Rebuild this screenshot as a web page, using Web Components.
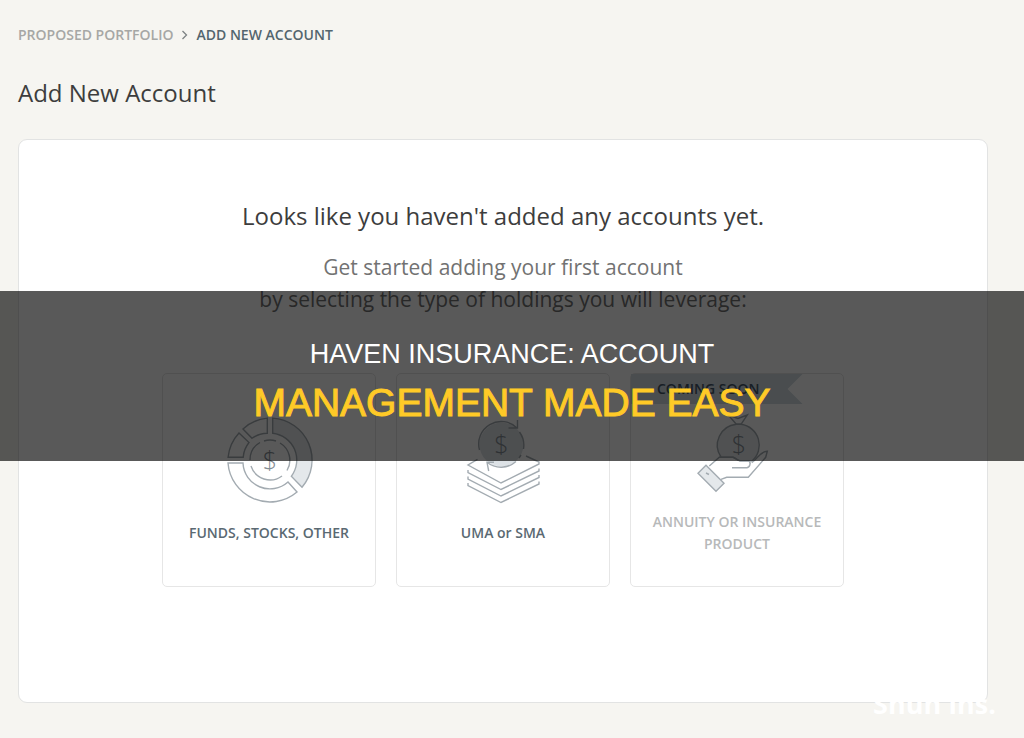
<!DOCTYPE html>
<html lang="en">
<head>
  <meta charset="utf-8">
  <meta name="viewport" content="width=device-width, initial-scale=1">
  <title>Add New Account</title>
  <style>
    body {
      margin: 0;
      background: #f6f5f1;
      font-family: 'Open Sans', 'Noto Sans', sans-serif;
      color: #3d3d3d;
    }
  </style>
</head>
<body>
  <account-page>
    <bread-crumb slot="crumbs" parent="PROPOSED PORTFOLIO" current="ADD NEW ACCOUNT"></bread-crumb>
    <span slot="title">Add New Account</span>
    <empty-panel>
      <span slot="heading">Looks like you haven't added any accounts yet.</span>
      <span slot="text">Get started adding your first account<br>by selecting the type of holdings you will leverage:</span>
      <account-option icon="funds">FUNDS, STOCKS, OTHER</account-option>
      <account-option icon="uma">UMA or SMA</account-option>
      <account-option icon="annuity" badge="COMING SOON" disabled>ANNUITY OR INSURANCE PRODUCT</account-option>
    </empty-panel>
  </account-page>
  <title-banner>
    HAVEN INSURANCE: ACCOUNT
    <span slot="accent">MANAGEMENT MADE EASY</span>
  </title-banner>
  <site-mark>Shun Ins.</site-mark>

  <script>
    const icons = {
      funds: `
        <g transform="translate(1 0)">
          <path class="tint" d="M47.7 3.1A42 42 0 0 1 77 72.3L66.3 61.3A27 27 0 0 0 47.7 18.2Z"/>
          <path d="M72 77A42 42 0 0 1 3 48H18A27 27 0 0 0 63 67Z"/>
          <path d="M3.1 42.3A42 42 0 0 1 14 18L24 27.5A27 27 0 0 0 18.2 42.3Z"/>
          <path d="M18 14A42 42 0 0 1 42.3 3.1V18.2A27 27 0 0 0 27 23.3Z"/>
          <path d="M39 26A20 20 0 0 1 51 26M55 28A20 20 0 0 1 62 55.5M57 61A20 20 0 0 1 26 51M25 45A20 20 0 0 1 35 27.5"/>
          <text x="45" y="54">$</text>
        </g>`,
      uma: `
        <path d="M19.5 44.3L10 50L43 68L81 49V47L68 41"/>
        <path d="M10 55V57.5L43 74.5L81 56V53.5"/>
        <path d="M10 61.5V64L43 81L81 62.5V60"/>
        <path d="M10 68V70.5L43 87.5L81 69V66.5"/>
        <circle class="fill" cx="43.5" cy="29.5" r="22"/>
        <path d="M21.5 35A22.5 22.5 0 0 1 59 13M59.5 5V13H50.5"/>
        <path d="M61.5 17A22.5 22.5 0 0 1 65.5 34M63 40L61 43M58 46.5A22.5 22.5 0 0 1 29 47.3M30.7 56L29 47.3H36"/>
        <text x="43.5" y="38">$</text>`,
      annuity: `
        <g transform="translate(-1 0)">
          <path class="tint" d="M42 42.3H28.5L30 42A21 21 0 0 1 45.3 9.3H50A21 21 0 0 1 61 46H49Z"/>
          <path d="M45.3 9.3L37.3 0L47 3.5L56.3 0L50 9.3Z"/>
          <path d="M18.3 51L28.3 42.3H42C45 42.3 45 45.5 49 45.7H58C60 48 59 52.7 55.7 52.7H41"/>
          <path d="M60.7 47.7C67 43.5 68 37 76.3 36.3L74.7 42.3L57.3 62.3H35.7L30 64.3"/>
          <path class="tint" d="M15 50.3L33 68.3L25 76.3L7 58.3Z"/>
          <path d="M15 58L18 59.5"/>
          <text x="48" y="38">$</text>
        </g>`
    };

    class AccountPage extends HTMLElement {
      constructor() {
        super();

        this.attachShadow({ mode: 'open' });
        this.shadowRoot.innerHTML = `
          <style>
            :host {
              display: block;
              padding: 24px 36px 35px 18px;
            }

            h1 {
              margin: 30px 0 29px;
              font-size: 24px;
              line-height: 34px;
              font-weight: 400;
            }
          </style>
          <slot name="crumbs"></slot>
          <main>
            <h1><slot name="title"></slot></h1>
            <slot></slot>
          </main>
        `;
      }
    }

    class BreadCrumb extends HTMLElement {
      constructor() {
        super();

        const parent = this.getAttribute('parent');
        const current = this.getAttribute('current');

        this.attachShadow({ mode: 'open' });
        this.shadowRoot.innerHTML = `
          <style>
            :host {
              display: block;
              font-size: 14px;
              line-height: 22px;
              font-weight: 600;
            }

            nav {
              display: flex;
              align-items: center;
              gap: 8px;
            }

            a {
              color: #a6a7a5;
              text-decoration: none;
            }

            svg {
              width: 7px;
              height: 10px;
              fill: none;
              stroke: #7d8284;
              stroke-width: 1.3;
            }

            span {
              color: #53656e;
            }
          </style>
          <nav aria-label="Breadcrumb">
            <a href="#">${parent}</a>
            <svg viewBox="0 0 7 10" aria-hidden="true"><path d="M1.5 1L5.5 5L1.5 9"/></svg>
            <span aria-current="page">${current}</span>
          </nav>
        `;
      }
    }

    class EmptyPanel extends HTMLElement {
      constructor() {
        super();

        this.attachShadow({ mode: 'open' });
        this.shadowRoot.innerHTML = `
          <style>
            :host {
              display: block;
              padding: 60px 24px 115px;
              background: #fff;
              border: 1px solid #e2e3e3;
              border-radius: 9px;
              text-align: center;
            }

            h2 {
              margin: 0 0 19px;
              font-size: 24px;
              line-height: 32px;
              font-weight: 400;
            }

            p {
              margin: 0 0 58px;
              font-size: 21px;
              line-height: 32px;
              color: #727272;
            }

            .options {
              display: flex;
              flex-wrap: wrap;
              justify-content: center;
              gap: 20px;
            }
          </style>
          <h2><slot name="heading"></slot></h2>
          <p><slot name="text"></slot></p>
          <div class="options"><slot></slot></div>
        `;
      }
    }

    class AccountOption extends HTMLElement {
      constructor() {
        super();

        const icon = this.getAttribute('icon');
        const badge = this.getAttribute('badge');
        const disabled = this.hasAttribute('disabled');

        this.attachShadow({ mode: 'open' });
        this.shadowRoot.innerHTML = `
          <style>
            :host {
              display: block;
              width: 214px;
            }

            button {
              position: relative;
              display: flex;
              flex-direction: column;
              align-items: center;
              gap: 6px;
              box-sizing: border-box;
              width: 100%;
              margin: 0;
              padding: 41px 16px 31px;
              background: #fff;
              border: 1px solid #e6e6e6;
              border-radius: 5px;
              font: 600 14px/22px 'Open Sans', 'Noto Sans', sans-serif;
              color: #5a6972;
              cursor: pointer;
            }

            button:disabled {
              color: #b7b9ba;
              cursor: default;
            }

            svg {
              width: 90px;
              height: 90px;
              overflow: visible;
              fill: none;
              stroke: #a3abb1;
              stroke-width: 1.4;
            }

            .tint {
              fill: #e4e8eb;
            }

            .fill {
              fill: #dde2e6;
              stroke: none;
            }

            text {
              font-size: 25px;
              font-weight: 300;
              text-anchor: middle;
              fill: #848d94;
              stroke: none;
            }

            .label {
              display: flex;
              align-items: center;
              min-height: 44px;
            }

            .badge {
              position: absolute;
              top: 0;
              left: 0;
              padding: 4px 43px 4px 26px;
              background: #d3dde2;
              color: #46586a;
              clip-path: polygon(0 0, 100% 0, calc(100% - 15px) 50%, 100% 100%, 0 100%);
            }
          </style>
          <button type="button" ${disabled ? 'disabled' : ''}>
            <svg viewBox="0 0 90 90" aria-hidden="true">${icons[icon]}</svg>
            <span class="label"><slot></slot></span>
            ${badge ? `<span class="badge">${badge}</span>` : ''}
          </button>
        `;
      }
    }

    class TitleBanner extends HTMLElement {
      constructor() {
        super();

        this.attachShadow({ mode: 'open' });
        this.shadowRoot.innerHTML = `
          <style>
            :host {
              position: absolute;
              top: 291px;
              left: 0;
              right: 0;
              padding: 40px 0 32px;
              background: rgba(0, 0, 0, 0.65);
              font-family: 'Liberation Sans', Arial, sans-serif;
              text-align: center;
              color: #fff;
            }

            div {
              font-size: 27px;
              line-height: 46px;
            }

            .accent {
              font-size: 39px;
              line-height: 52px;
              color: #ffca27;
              -webkit-text-stroke: 1px #ffca27;
            }
          </style>
          <div><slot></slot></div>
          <div class="accent"><slot name="accent"></slot></div>
        `;
      }
    }

    class SiteMark extends HTMLElement {
      constructor() {
        super();

        this.attachShadow({ mode: 'open' });
        this.shadowRoot.innerHTML = `
          <style>
            :host {
              position: absolute;
              top: 686px;
              right: 28px;
              font-size: 27px;
              line-height: 36px;
              font-weight: 700;
              color: #fff;
            }
          </style>
          <slot></slot>
        `;
      }
    }

    window.customElements.define('account-page', AccountPage);
    window.customElements.define('bread-crumb', BreadCrumb);
    window.customElements.define('empty-panel', EmptyPanel);
    window.customElements.define('account-option', AccountOption);
    window.customElements.define('title-banner', TitleBanner);
    window.customElements.define('site-mark', SiteMark);
  </script>
</body>
</html>
